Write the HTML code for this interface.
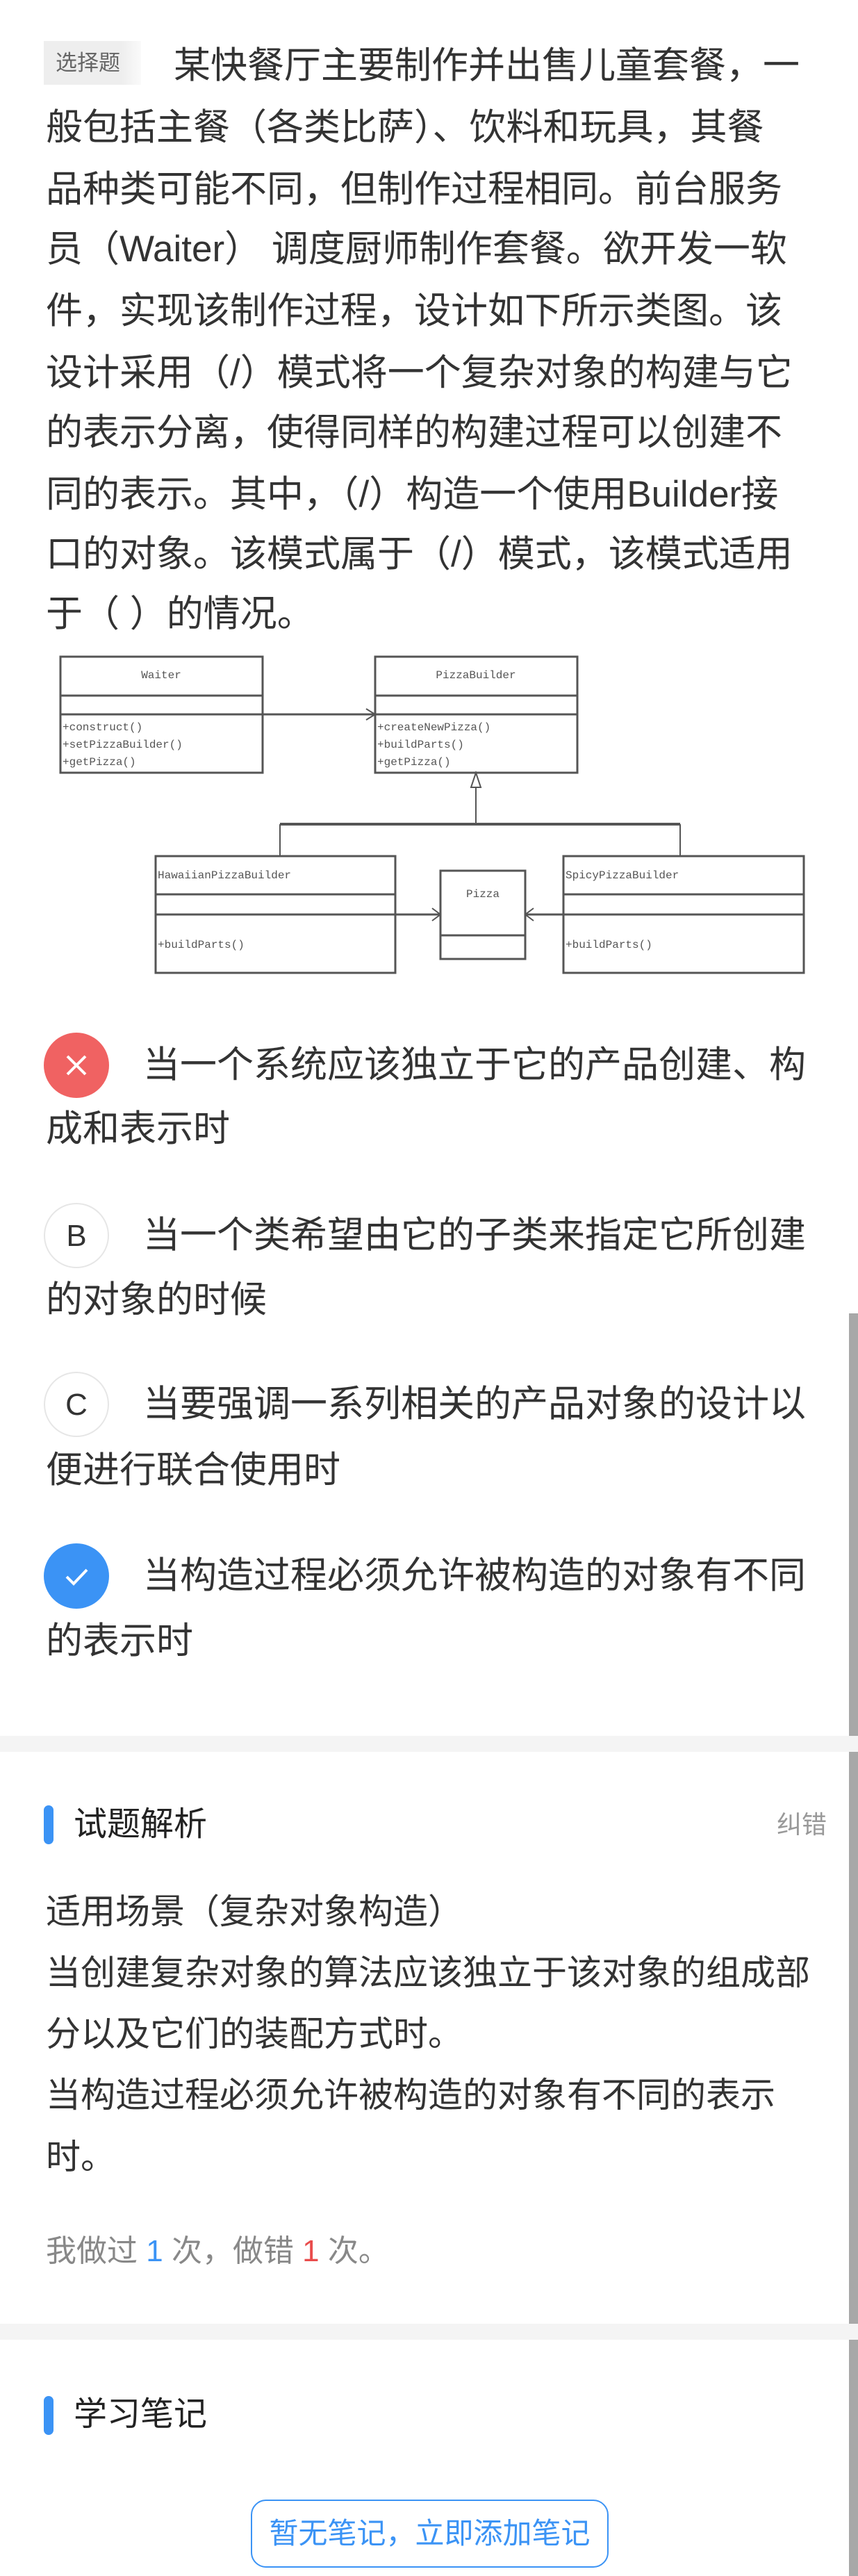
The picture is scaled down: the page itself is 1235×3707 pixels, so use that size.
<!DOCTYPE html>
<html><head><meta charset="utf-8"><style>
html,body{margin:0;padding:0;background:#fff;}
body{width:1235px;height:3707px;position:relative;overflow:hidden;font-family:"Liberation Sans","Noto Sans CJK SC",sans-serif;color:#333;}
.l{position:absolute;left:66px;white-space:nowrap;font-size:53px;height:88px;line-height:88px;}
.o{position:absolute;left:66px;white-space:nowrap;font-size:53px;height:92px;line-height:92px;}
.e{position:absolute;left:66px;white-space:nowrap;font-size:50px;height:88px;line-height:88px;}
.c{position:absolute;left:63px;width:94px;height:94px;border-radius:50%;box-sizing:border-box;text-align:center;line-height:92px;font-size:44px;}
.band{position:absolute;left:0;width:1235px;height:23px;background:#f4f4f4;}
.bar{position:absolute;left:63px;width:14px;height:56px;border-radius:7px;background:#3b93f5;}
.h{position:absolute;left:106px;font-size:48px;height:60px;line-height:60px;color:#222;}
</style></head><body>

<div style="position:absolute;left:63px;top:59px;width:140px;height:63px;background:linear-gradient(90deg,#eee 80%,#fafafa);"></div>
<div style="position:absolute;left:80px;top:59px;height:63px;line-height:63px;font-size:31px;color:#666;">选择题</div>

<div class="l" style="top:51px;left:250px;">某快餐厅主要制作并出售儿童套餐，一</div>
<div class="l" style="top:140px;">般包括主餐（各类比萨）、饮料和玩具，其餐</div>
<div class="l" style="top:229px;">品种类可能不同，但制作过程相同。前台服务</div>
<div class="l" style="top:315px;">员（Waiter） 调度厨师制作套餐。欲开发一软</div>
<div class="l" style="top:404px;">件，实现该制作过程，设计如下所示类图。该</div>
<div class="l" style="top:493px;">设计采用（/）模式将一个复杂对象的构建与它</div>
<div class="l" style="top:579px;">的表示分离，使得同样的构建过程可以创建不</div>
<div class="l" style="top:668px;">同的表示。其中，（/）构造一个使用Builder接</div>
<div class="l" style="top:754px;">口的对象。该模式属于（/）模式，该模式适用</div>
<div class="l" style="top:840px;">于（ ）的情况。</div>

<svg style="position:absolute;left:0;top:0" width="1235" height="1420" viewBox="0 0 1235 1420">
<g fill="none" stroke="#555" stroke-width="3">
<rect x="87" y="945" width="291" height="167"/>
<line x1="87" y1="1001" x2="378" y2="1001"/>
<line x1="87" y1="1028" x2="540" y2="1028"/>
<rect x="540" y="945" width="291" height="167"/>
<line x1="540" y1="1001" x2="831" y2="1001"/>
<line x1="540" y1="1028" x2="831" y2="1028"/>
<path d="M527 1020 L540 1028 L527 1036" stroke-width="2"/>
<path d="M685 1112 L678 1133 L692 1133 Z" stroke-width="2"/>
<line x1="685" y1="1133" x2="685" y2="1186" stroke-width="2"/>
<line x1="403" y1="1186" x2="979" y2="1186" stroke-width="4"/>
<line x1="403" y1="1186" x2="403" y2="1232" stroke-width="2"/>
<line x1="979" y1="1186" x2="979" y2="1232" stroke-width="2"/>
<rect x="224" y="1232" width="345" height="168"/>
<line x1="224" y1="1287" x2="569" y2="1287"/>
<line x1="224" y1="1316" x2="634" y2="1316"/>
<rect x="634" y="1253" width="122" height="127"/>
<line x1="634" y1="1346" x2="756" y2="1346"/>
<line x1="756" y1="1316" x2="1157" y2="1316"/>
<rect x="811" y="1232" width="346" height="168"/>
<line x1="811" y1="1287" x2="1157" y2="1287"/>
<path d="M622 1307 L634 1316 L622 1325" stroke-width="2"/>
<path d="M768 1307 L756 1316 L768 1325" stroke-width="2"/>
</g>
<g font-family="Liberation Mono,monospace" font-size="16" fill="#555">
<text x="232" y="976" text-anchor="middle">Waiter</text>
<text x="90" y="1051">+construct()</text>
<text x="90" y="1076">+setPizzaBuilder()</text>
<text x="90" y="1101">+getPizza()</text>
<text x="685" y="976" text-anchor="middle">PizzaBuilder</text>
<text x="543" y="1051">+createNewPizza()</text>
<text x="543" y="1076">+buildParts()</text>
<text x="543" y="1101">+getPizza()</text>
<text x="227" y="1264">HawaiianPizzaBuilder</text>
<text x="227" y="1364">+buildParts()</text>
<text x="695" y="1291" text-anchor="middle">Pizza</text>
<text x="814" y="1264">SpicyPizzaBuilder</text>
<text x="814" y="1364">+buildParts()</text>
</g>
</svg>

<div class="c" style="top:1486px;background:#f06262;"><svg width="94" height="94" style="position:absolute;left:0;top:0"><path d="M34 34 L60 60 M60 34 L34 60" stroke="#fff" stroke-width="4" fill="none"/></svg></div>
<div class="o" style="top:1487px;left:206px;">当一个系统应该独立于它的产品创建、构</div>
<div class="o" style="top:1579px;">成和表示时</div>

<div class="c" style="top:1731px;border:2px solid #e6e6e6;color:#333;">B</div>
<div class="o" style="top:1732px;left:206px;">当一个类希望由它的子类来指定它所创建</div>
<div class="o" style="top:1825px;">的对象的时候</div>

<div class="c" style="top:1974px;border:2px solid #e6e6e6;color:#333;">C</div>
<div class="o" style="top:1975px;left:206px;">当要强调一系列相关的产品对象的设计以</div>
<div class="o" style="top:2070px;">便进行联合使用时</div>

<div class="c" style="top:2221px;background:#3b93f5;"><svg width="94" height="94" style="position:absolute;left:0;top:0"><path d="M33 48 L43 58 L62 38" stroke="#fff" stroke-width="4" fill="none"/></svg></div>
<div class="o" style="top:2222px;left:206px;">当构造过程必须允许被构造的对象有不同</div>
<div class="o" style="top:2316px;">的表示时</div>

<div style="position:absolute;left:1222px;top:1890px;width:13px;height:1817px;background:#a8a8a8;"></div>

<div class="band" style="top:2498px;"></div>
<div class="bar" style="top:2598px;"></div>
<div class="h" style="top:2596px;">试题解析</div>
<div style="position:absolute;left:1118px;top:2606px;font-size:36px;line-height:40px;color:#999;">纠错</div>

<div class="e" style="top:2707px;">适用场景（复杂对象构造）</div>
<div class="e" style="top:2795px;">当创建复杂对象的算法应该独立于该对象的组成部</div>
<div class="e" style="top:2883px;">分以及它们的装配方式时。</div>
<div class="e" style="top:2971px;">当构造过程必须允许被构造的对象有不同的表示</div>
<div class="e" style="top:3060px;">时。</div>
<div style="position:absolute;left:66px;top:3212px;font-size:44px;line-height:56px;color:#888;white-space:nowrap;">我做过 <span style="color:#3b93f5">1</span> 次，做错 <span style="color:#e94c4c">1</span> 次。</div>

<div class="band" style="top:3344px;"></div>
<div class="bar" style="top:3448px;"></div>
<div class="h" style="top:3445px;">学习笔记</div>

<div style="position:absolute;left:361px;top:3597px;width:515px;height:98px;box-sizing:border-box;border:2px solid #3b93f5;border-radius:22px;color:#3b93f5;font-size:42px;line-height:94px;text-align:center;">暂无笔记，立即添加笔记</div>
</body></html>
